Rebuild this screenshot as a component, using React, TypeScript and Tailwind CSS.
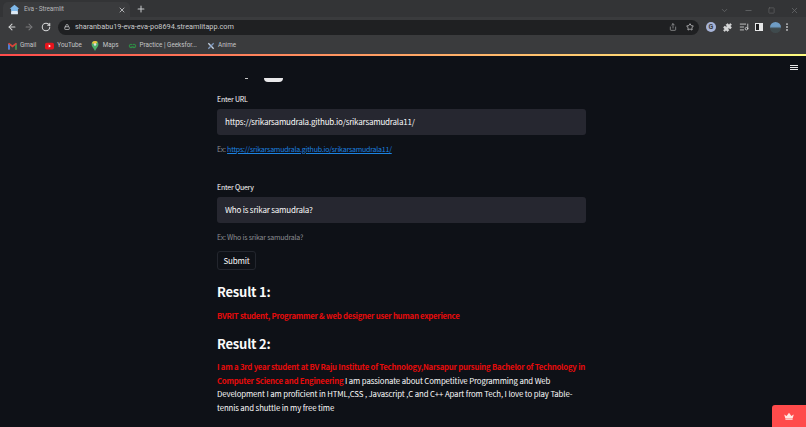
import { ArrowLeft, ArrowRight, Lock, Minus, Plus, RotateCw, Star, X, ChevronDown, Square, Share, Puzzle, ListMusic, EllipsisVertical } from "lucide-react";

const uiFont = "font-['Roboto','Liberation_Sans',sans-serif]";
const bodyFont = "font-['Noto_Sans_CJK_SC','Noto_Sans',sans-serif]";

function Favicon() {
  return (
    <svg viewBox="0 0 16 16" className="h-[11px] w-[11px]">
      <path d="M8 1 1 7h2v3h10V7h2z" fill="#7fb9ea" />
      <rect x="3" y="10" width="10" height="5" rx="1" fill="#dce9f5" />
    </svg>
  );
}

function GmailIcon() {
  return (
    <svg viewBox="0 0 16 12" className="h-[8px] w-[9px]">
      <path d="M0 2v10h3.500V5L8 8.500 12.500 5v7H16V2l-2-2-6 4.500L2 0z" fill="#d9453a" />
      <path d="M12.500 5v7H16V2z" fill="#3b8a4d" />
      <path d="M0 2v10h3.500V5z" fill="#4a7fd8" />
    </svg>
  );
}

function YoutubeIcon() {
  return (
    <svg viewBox="0 0 16 12" className="h-[8px] w-[9px]">
      <rect width="16" height="12" rx="3" fill="#e8141c" />
      <path d="m6.500 3.500 4 2.500-4 2.500z" fill="#fff" />
    </svg>
  );
}

function MapsIcon() {
  return (
    <svg viewBox="0 0 12 16" className="h-[10px] w-[8px]">
      <path d="M6 0a5.500 5.500 0 0 0-5.500 5.500C.5 9 4 11 6 16c2-5 5.500-7 5.500-10.500A5.500 5.500 0 0 0 6 0z" fill="#4caf6a" />
      <path d="M1 3.500A5.500 5.500 0 0 1 6 0a5.500 5.500 0 0 1 4 1.700L7 5z" fill="#f0c33c" />
      <circle cx="6" cy="5.500" r="2" fill="#d8dfe6" />
    </svg>
  );
}

function GeeksIcon() {
  return (
    <svg viewBox="0 0 16 10" className="h-[6px] w-[9px]" fill="none" stroke="#2f8d46" strokeWidth="1.800">
      <path d="M7.500 3A3 3 0 1 0 7.500 7H4.500" />
      <path d="M8.500 3A3 3 0 1 1 8.500 7H11.500" />
    </svg>
  );
}

function AnimeIcon() {
  return (
    <svg viewBox="0 0 12 12" className="h-[8px] w-[8px]" fill="none" strokeWidth="2">
      <path d="m2 2 8 8" stroke="#c6d3e4" />
      <path d="M10 2 2 10" stroke="#7d97bd" />
    </svg>
  );
}

function CrownIcon() {
  return (
    <svg viewBox="0 0 14 10" className="h-[8px] w-[12px]">
      <path d="M1 3l3 2 3-4 3 4 3-2-1.500 5h-9z" fill="#ffe9e4" />
      <rect x="2.500" y="8.500" width="9" height="1.200" fill="#ffe9e4" />
    </svg>
  );
}

const bookmarks = [
  { icon: <GmailIcon />, label: "Gmail" },
  { icon: <YoutubeIcon />, label: "YouTube" },
  { icon: <MapsIcon />, label: "Maps" },
  { icon: <GeeksIcon />, label: "Practice | Geeksfor..." },
  { icon: <AnimeIcon />, label: "Anime" },
];

function BrowserChrome() {
  return (
    <div className={uiFont}>
      <div className="flex h-[17px] items-end bg-[#333436] pl-[3px]">
        <div className="flex h-[15px] w-[127px] items-center rounded-t-[5px] bg-[#3a3b3d] pl-[6px] pr-[4px]">
          <Favicon />
          <span className="ml-[4px] flex-1 text-[6.500px] tracking-[-0.1px] text-[#b4b6b9]">Eva - Streamlit</span>
          <X size={8} strokeWidth={2.500} className="text-[#c6c8ca]" />
        </div>
        <Plus size={10} strokeWidth={2.500} className="mb-[3px] ml-[6px] text-[#c6c8ca]" />
        <div className="mb-[2px] ml-auto flex items-center gap-[15px] pr-[7px] text-[#6a6b6d]">
          <ChevronDown size={9} />
          <Minus size={9} />
          <Square size={7} />
          <X size={9} />
        </div>
      </div>
      <div className="flex h-[20px] items-center bg-[#3a3b3d] px-[7px]">
        <ArrowLeft size={10} strokeWidth={2.500} className="text-[#d6d7d8]" />
        <ArrowRight size={10} strokeWidth={2.500} className="ml-[7px] text-[#7a7b7d]" />
        <RotateCw size={10} strokeWidth={2.500} className="ml-[7px] text-[#d6d7d8]" />
        <div className="ml-[7px] flex h-[15px] w-[641px] items-center rounded-full bg-[#1f2022] pl-[6px] pr-[5px]">
          <Lock size={6} strokeWidth={3} className="text-[#c0c1c3]" />
          <span className="ml-[5px] flex-1 text-[7.300px] text-[#c9cacc]">sharanbabu19-eva-eva-po8694.streamlitapp.com</span>
          <Share size={8} className="mr-[9px] text-[#a9aaac]" />
          <Star size={8} strokeWidth={2.500} className="text-[#c6c7c9]" />
        </div>
        <div className="ml-[7px] flex h-[10px] w-[10px] items-center justify-center rounded-full bg-[#a7b4d8] text-[7px] font-bold text-[#3a3b3d]">G</div>
        <Puzzle size={9} fill="#d6d7d8" className="ml-[7px] text-[#d6d7d8]" />
        <ListMusic size={10} className="ml-[7px] text-[#d6d7d8]" />
        <div className="ml-[6px] flex h-[8px] w-[8px] justify-end border border-[#e6e7e8] bg-[#1f2022]">
          <div className="h-full w-[3px] bg-[#e6e7e8]" />
        </div>
        <div className="ml-[7px] h-[11px] w-[11px] rounded-full bg-[linear-gradient(180deg,#6f9cc4_40%,#3f4a4d_60%)]" />
        <EllipsisVertical size={10} strokeWidth={2.500} className="ml-[1px] text-[#c9cacc]" />
      </div>
      <div className="flex h-[17px] items-center gap-[9px] bg-[#3a3b3d] pl-[8px]">
        {bookmarks.map((b) => (
          <div key={b.label} className="flex items-center gap-[3px]">
            <span className="flex w-[9px] justify-center">{b.icon}</span>
            <span className="text-[6.300px] text-[#c4c5c7]">{b.label}</span>
          </div>
        ))}
      </div>
      <div className="h-[2px] bg-[linear-gradient(90deg,#ff4b4b,#fffd80)]" />
    </div>
  );
}

function TextField({ label, value }: { label: string; value: string }) {
  return (
    <>
      <div className="text-[7px] leading-[12px] tracking-[-0.2px] text-[#fafafa]">{label}</div>
      <div className="mt-[4px] flex h-[26px] items-center rounded-[3px] bg-[#262730] pl-[8px] text-[8px] tracking-[-0.2px] text-[#fafafa]">{value}</div>
    </>
  );
}

export default function App() {
  return (
    <div className="flex h-[427px] w-[806px] flex-col overflow-hidden bg-[#0e1117]">
      <BrowserChrome />
      <div className={`relative flex-1 ${bodyFont}`}>
        <div className="absolute right-[8px] top-[9px] flex w-[8px] flex-col gap-[1px]">
          <div className="h-px bg-[#e6e6e6]" />
          <div className="h-px bg-[#e6e6e6]" />
          <div className="h-px bg-[#e6e6e6]" />
        </div>
        <div className="ml-[217px] w-[369px]">
          <div className="flex h-[37px] items-start pt-[22px]">
            <div className="ml-[28px] h-px w-[3px] bg-[#c8c8c8]" />
            <div className="ml-[16px] h-[4px] w-[19px] rounded-b-full bg-[#e8e8ea]" />
          </div>
          <TextField label="Enter URL" value="https://srikarsamudrala.github.io/srikarsamudrala11/" />
          <div className="mt-[8px] text-[7px] leading-[12px] tracking-[-0.2px] text-[#8b8d92]">
            Ex: <a className="text-[#1c83e1] underline" href="#top">https://srikarsamudrala.github.io/srikarsamudrala11/</a>
          </div>
          <div className="mt-[26px]">
            <TextField label="Enter Query" value="Who is srikar samudrala?" />
          </div>
          <div className="mt-[8px] text-[7px] leading-[12px] tracking-[-0.2px] text-[#8b8d92]">Ex: Who is srikar samudrala?</div>
          <button className="mt-[8px] flex h-[19px] w-[39px] items-center justify-center rounded-[3px] border border-[#23262e] text-[8px] tracking-[-0.2px] text-[#fafafa]">Submit</button>
          <h2 className="mt-[12px] text-[13px] font-semibold leading-[20px] tracking-[-0.2px] text-[#fafafa]">Result 1:</h2>
          <p className="mt-[7px] text-[7.800px] font-bold leading-[14px] tracking-[-0.27px] text-[#e50b0b]">BVRIT student, Programmer &amp; web designer user human experience</p>
          <h2 className="mt-[11px] text-[13px] font-semibold leading-[20px] tracking-[-0.2px] text-[#fafafa]">Result 2:</h2>
          <p className="mt-[6px] text-[7.800px] leading-[13.600px] tracking-[-0.12px] text-[#fafafa]">
            <span className="font-bold tracking-[-0.24px] text-[#e50b0b]">I am a 3rd year student at BV Raju Institute of Technology,Narsapur pursuing Bachelor of Technology in Computer Science and Engineering</span>{" "}
            I am passionate about Competitive Programming and Web Development I am proficient in HTML,CSS , Javascript ,C and C++ Apart from Tech, I love to play Table-tennis and shuttle in my free time
          </p>
        </div>
        <div className="absolute bottom-0 right-0 flex h-[22px] w-[34px] items-center justify-center rounded-tl-[3px] bg-[#ff4b4b]">
          <CrownIcon />
        </div>
      </div>
    </div>
  );
}
